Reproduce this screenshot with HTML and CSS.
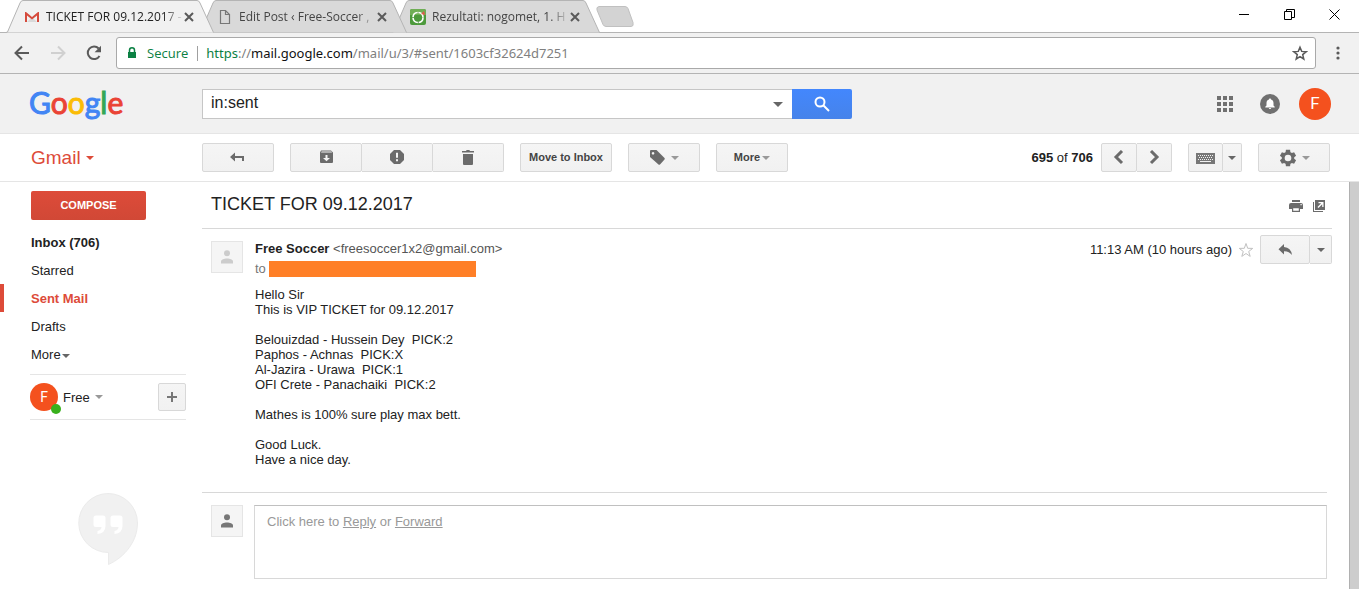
FILE: index.html
```
<!DOCTYPE html>
<html lang="en">
<head>
  <meta charset="UTF-8">
  <meta name="viewport" content="width=device-width, initial-scale=1.0">
  <title>TICKET FOR 09.12.2017 - Gmail</title>
  <link rel="stylesheet" href="styles.css">
</head>
<body>
  <!-- Browser tabs -->
  <div class="tab-strip">
    <div class="tabs">
      <div class="tab active">
        <svg class="tab-shape" viewBox="0 0 208 33" preserveAspectRatio="none"><path d="M0 32.5 L1.5 32 L14 3 Q15 .5 17 .5 L191 .5 Q193 .5 194 3 L207.5 32.5"/></svg>
        <svg class="favicon" viewBox="0 0 16 16"><path fill="#f2f2f2" d="M1 3h14v10H1z"/><path fill="#d9d9d9" d="M3 13l5-5 5 5z"/><path fill="#d54b3d" d="M1 3h1l6 5 6-5h1v10h-2V6.500L8 10.500 3 6.500V13H1z"/></svg>
        <span class="tab-title">TICKET FOR 09.12.2017 -</span>
        <button class="tab-close" aria-label="Close tab"><svg viewBox="0 0 10 10"><path d="M1 1l8 8M9 1l-8 8"/></svg></button>
      </div>
      <div class="tab second">
        <svg class="tab-shape" viewBox="0 0 208 33" preserveAspectRatio="none"><path d="M0 32.5 L1.5 32 L14 3 Q15 .5 17 .5 L191 .5 Q193 .5 194 3 L207.5 32.5"/></svg>
        <svg class="favicon" viewBox="0 0 16 16"><path fill="none" stroke="#777" stroke-width="1.2" d="M3.500 1.500h5l4 4v9h-9zM8.500 1.500v4h4"/></svg>
        <span class="tab-title">Edit Post ‹ Free-Soccer ,</span>
        <button class="tab-close" aria-label="Close tab"><svg viewBox="0 0 10 10"><path d="M1 1l8 8M9 1l-8 8"/></svg></button>
      </div>
      <div class="tab third">
        <svg class="tab-shape" viewBox="0 0 208 33" preserveAspectRatio="none"><path d="M0 32.5 L1.5 32 L14 3 Q15 .5 17 .5 L191 .5 Q193 .5 194 3 L207.5 32.5"/></svg>
        <svg class="favicon" viewBox="0 0 16 16"><rect width="16" height="16" rx="2" fill="#4d9a3c"/><path fill="#6fae55" d="M2 0h12q2 0 2 2v4H0V2q0-2 2-2z"/><circle cx="8" cy="8.5" r="5" fill="none" stroke="#fff" stroke-width="1.6" stroke-dasharray="7 .8"/><path fill="#e2574c" d="M11 5l3-3 1 4z"/></svg>
        <span class="tab-title">Rezultati: nogomet, 1. H</span>
        <button class="tab-close" aria-label="Close tab"><svg viewBox="0 0 10 10"><path d="M1 1l8 8M9 1l-8 8"/></svg></button>
      </div>
      <button class="new-tab" aria-label="New tab"><svg viewBox="0 0 38 21"><path d="M3 .5h26q2 0 3 2l5 14q1 4-2 4H10q-2 0-3-2L1 4q-1-3 2-3.500z"/></svg></button>
    </div>
    <div class="window-controls">
      <button aria-label="Minimize"><svg viewBox="0 0 11 11"><path d="M0 5.500h10"/></svg></button>
      <button aria-label="Restore"><svg viewBox="0 0 11 11"><path d="M.5 2.500h7v8h-7zM2.500 2.500v-2h8v8h-3"/></svg></button>
      <button aria-label="Close"><svg viewBox="0 0 11 11"><path d="M.5.5l10 10M10.500.5l-10 10"/></svg></button>
    </div>
  </div>

  <div class="address-row">
    <button class="nav-btn" aria-label="Back"><svg viewBox="0 0 16 16"><path d="M15 8H2M8 1.500L1.500 8 8 14.500"/></svg></button>
    <button class="nav-btn disabled" aria-label="Forward"><svg viewBox="0 0 16 16"><path d="M1 8h13M8 1.500L14.500 8 8 14.500"/></svg></button>
    <button class="nav-btn" aria-label="Reload"><svg viewBox="0 0 16 16"><path d="M13.500 11a6.300 6.300 0 1 1-.8-7.500"/><path class="solid" d="M15 .8v6.400H8.600z"/></svg></button>
    <div class="omnibox">
      <svg class="lock" viewBox="0 0 10 12"><path fill="none" stroke="#0b8043" stroke-width="1.5" d="M2.500 6V3.300a2.500 2.500 0 0 1 5 0V6"/><rect x="1" y="5" width="8" height="6" fill="#0b8043"/></svg>
      <span class="secure">Secure</span>
      <span class="url"><span class="scheme">https</span>://<span class="host">mail.google.com</span>/mail/u/3/#sent/1603cf32624d7251</span>
      <svg class="bookmark" viewBox="0 0 16 16"><path stroke-width="1.5" d="M8 2.200l1.700 4.200 4.500.3-3.500 2.900 1.100 4.400L8 11.600l-3.800 2.400 1.100-4.400-3.500-2.900 4.500-.3z"/></svg>
    </div>
    <button class="menu-btn" aria-label="Menu"><svg viewBox="0 0 4 14"><circle cx="2" cy="2" r="1.600"/><circle cx="2" cy="7" r="1.600"/><circle cx="2" cy="12" r="1.600"/></svg></button>
  </div>

  <!-- Google bar -->
  <header class="header">
    <a class="logo" href="#" aria-label="Google"><span class="blue">G</span><span class="red">o</span><span class="yellow">o</span><span class="blue">g</span><span class="green">l</span><span class="red">e</span></a>
    <form class="search">
      <input type="text" value="in:sent" aria-label="Search mail">
      <button type="button" class="search-options" aria-label="Search options"><span class="caret big"></span></button>
      <button type="button" class="search-btn" aria-label="Search"><svg viewBox="0 0 16 16"><circle cx="6" cy="6" r="4.500"/><path d="M9.500 9.500l5.500 5.500"/></svg></button>
    </form>
    <div class="header-right">
      <button class="apps" aria-label="Apps"><svg viewBox="0 0 16 16"><path d="M0 0h4v4H0zM6 0h4v4H6zM12 0h4v4h-4zM0 6h4v4H0zM6 6h4v4H6zM12 6h4v4h-4zM0 12h4v4H0zM6 12h4v4H6zM12 12h4v4h-4z"/></svg></button>
      <button class="bell" aria-label="Notifications"><svg viewBox="0 0 20 20"><circle cx="10" cy="10" r="10" fill="#707070"/><path fill="#fff" d="M10 4.500c.7 0 1 .4 1 1 1.700.5 2.500 1.800 2.500 3.500v2.500l1.200 1.200v.8H5.300v-.8l1.200-1.200V9c0-1.700.8-3 2.500-3.500 0-.6.300-1 1-1zM8.800 14h2.400q0 1-1.200 1t-1.200-1z"/></svg></button>
      <button class="avatar">F</button>
    </div>
  </header>

  <!-- Mail toolbar -->
  <div class="toolbar">
    <button class="gmail-menu">Gmail <span class="caret red-caret"></span></button>
    <div class="toolbar-left">
      <button class="btn" aria-label="Back to Sent Mail"><svg class="icon" viewBox="0 0 16 16"><path d="M0 7l5-4.500V6h9v5h-2V8H5v3.500z"/></svg></button>
      <div class="btn-group">
        <button class="btn" aria-label="Archive"><svg class="icon" viewBox="0 0 16 16"><path fill-rule="evenodd" d="M3 .5h10l2 2V12q0 1-1 1H3q-1 0-1-1V2.500zM3.700 1.600l-.7.900h11l-.7-.9zM7.500 5v3H5L8.500 11.300 12 8H9.500V5z"/></svg></button>
        <button class="btn" aria-label="Report spam"><svg class="icon" viewBox="0 0 16 16"><path fill-rule="evenodd" d="M5 0h6l4 4v6l-4 4H5l-4-4V4zM7 2.800v5h2v-5zM7 9.200v2h2v-2z"/></svg></button>
        <button class="btn" aria-label="Delete"><svg class="icon" viewBox="0 0 16 16"><path d="M2 1h4l.7-1h2.600L10 1h4v1.600H2zM3 4h10v10q0 1-1 1H4q-1 0-1-1z"/></svg></button>
      </div>
      <button class="btn wide">Move to Inbox</button>
      <button class="btn" aria-label="Labels"><svg class="icon" viewBox="0 0 16 16"><path fill-rule="evenodd" d="M2 0h5.500L15.500 8q.6.800 0 1.500L11 14.500q-.8.600-1.500 0L1 7V1q0-1 1-1zM4 2a1.300 1.300 0 1 0 .1 0z"/></svg><span class="caret pale gap"></span></button>
      <button class="btn">More<span class="caret pale near"></span></button>
    </div>
    <div class="toolbar-right">
      <span class="count"><b>695</b> of <b>706</b></span>
      <div class="btn-group narrow">
        <button class="btn" aria-label="Newer"><svg class="icon chevron" viewBox="0 0 16 16"><path d="M11 1L5 7l6 6"/></svg></button>
        <button class="btn" aria-label="Older"><svg class="icon chevron" viewBox="0 0 16 16"><path d="M5 1l6 6-6 6"/></svg></button>
      </div>
      <div class="btn-group keyboard">
        <button class="btn" aria-label="Input tools"><svg class="keys" viewBox="0 0 20 12"><path d="M0 1h19v11H0z"/><path stroke="#f1f1f1" stroke-dasharray="1 1" d="M2 3.500h15M3 5.500h14M2 7.500h15"/><path stroke="#f1f1f1" d="M4 9.500h11"/></svg></button>
        <button class="btn drop" aria-label="Select input tool"><span class="caret"></span></button>
      </div>
      <button class="btn" aria-label="Settings"><svg class="gear" viewBox="0 0 24 24"><path d="M19.400 13c0-.3.100-.7.100-1s0-.7-.1-1l2.300-1.800-2.400-4.200-2.700 1.100a8 8 0 0 0-1.700-1L14.500 2h-5l-.4 3.100a8 8 0 0 0-1.700 1L4.700 5 2.300 9.200 4.600 11a8 8 0 0 0 0 2l-2.300 1.800L4.700 19l2.700-1.100a8 8 0 0 0 1.700 1l.4 3.100h5l.4-3.100a8 8 0 0 0 1.700-1l2.700 1.100 2.400-4.200zM12 16a4 4 0 1 1 0-8 4 4 0 0 1 0 8z"/></svg><span class="caret pale"></span></button>
    </div>
  </div>

  <div class="main">
    <aside class="sidebar">
      <button class="compose">COMPOSE</button>
      <nav class="folders">
        <a href="#" class="unread">Inbox (706)</a>
        <a href="#">Starred</a>
        <a href="#" class="current">Sent Mail</a>
        <a href="#">Drafts</a>
        <a href="#">More <span class="caret small"></span></a>
      </nav>
      <div class="chat-user">
        <span class="chat-avatar">F<span class="online"></span></span>
        <span>Free</span>
        <span class="caret pale"></span>
        <button class="btn add" aria-label="New conversation"><svg viewBox="0 0 10 10"><path d="M5 0v10M0 5h10"/></svg></button>
      </div>
      <svg class="hangouts" viewBox="0 0 60 72"><path fill="#f1f1f1" stroke="#ebebeb" d="M30 .5a29.500 29.500 0 1 0 .5 59v12C47 64 59.500 48 59.500 30A29.500 29.500 0 0 0 30 .5z"/><path fill="#fff" d="M18 22.500h7q2.500 0 2.500 2.500v8q0 7-8 8v-3q4-1 4-4H18q-2.500 0-2.500-2.500V25q0-2.500 2.500-2.500zM35 22.500h7q2.500 0 2.500 2.500v8q0 7-8 8v-3q4-1 4-4H35q-2.500 0-2.500-2.500V25q0-2.500 2.500-2.500z"/></svg>
    </aside>

    <main class="content">
      <div class="subject">
        <h1>TICKET FOR 09.12.2017</h1>
        <button aria-label="Print all"><svg viewBox="0 0 14 14"><path fill-rule="evenodd" d="M3 2h8v2H3zM2 5h10q2 0 2 2v4h-3V9H3v2H0V7q0-2 2-2zM11.500 6v1.200h1.200V6zM3 9h8v5H3zM4.200 10.200v2.600h5.600v-2.600z"/></svg></button>
        <button aria-label="In new window"><svg viewBox="0 0 14 14"><path fill-rule="evenodd" d="M3 2h10v10H3zM6.500 4v1.300h2.700L5.500 9l1 1 3.700-3.700V9h1.300V4z"/><path d="M1 4h1v9h9v1H1z"/></svg></button>
      </div>

      <article class="message">
        <div class="photo"><svg viewBox="0 0 12 14"><circle cx="6" cy="3.200" r="3"/><path d="M0 13.500v-2C0 9.500 3 8.500 6 8.500s6 1 6 3v2z"/></svg></div>
        <div class="message-main">
          <div class="message-head">
            <div>
              <div class="from"><b>Free Soccer</b> <span>&lt;freesoccer1x2@gmail.com&gt;</span></div>
              <div class="to">to <span class="hidden-address"></span></div>
            </div>
            <div class="message-actions">
              <span>11:13 AM (10 hours ago)</span>
              <button class="star" aria-label="Star"><svg viewBox="0 0 16 16"><path d="M8 1.500l1.700 4.800 5 .1-4 3.100 1.500 4.900L8 11.500l-4.200 2.900 1.500-4.900-4-3.100 5-.1z"/></svg></button>
              <div class="btn-group reply">
                <button class="btn" aria-label="Reply"><svg class="icon" viewBox="0 0 16 16"><path d="M7 2v3q7 .5 8 8-3-4-8-3.800V12.500L1.500 7.200z"/></svg></button>
                <button class="btn drop" aria-label="More"><span class="caret"></span></button>
              </div>
            </div>
          </div>
          <div class="message-body">
            Hello Sir<br>
            This is VIP TICKET for 09.12.2017<br>
            <br>
            Belouizdad - Hussein Dey&nbsp; PICK:2<br>
            Paphos - Achnas&nbsp; PICK:X<br>
            Al-Jazira - Urawa&nbsp; PICK:1<br>
            OFI Crete - Panachaiki&nbsp; PICK:2<br>
            <br>
            Mathes is 100% sure play max bett.<br>
            <br>
            Good Luck.<br>
            Have a nice day.
          </div>
        </div>
      </article>

      <div class="reply-row">
        <div class="photo dark"><svg viewBox="0 0 12 14"><circle cx="6" cy="3.200" r="3"/><path d="M0 13.500v-2C0 9.500 3 8.500 6 8.500s6 1 6 3v2z"/></svg></div>
        <div class="reply-box">Click here to <a href="#">Reply</a> or <a href="#">Forward</a></div>
      </div>
    </main>
    <div class="scrollbar"></div>
  </div>
</body>
</html>
```

FILE: styles.css
```
* {
  box-sizing: border-box;
}

body {
  margin: 0;
  min-height: 100vh;
  display: flex;
  flex-direction: column;
  background: #fff;
  color: #222;
  font-family: "Liberation Sans", Arial, sans-serif;
  font-size: 13px;
  line-height: 15px;
}

button {
  margin: 0;
  padding: 0;
  border: 0;
  background: none;
  color: inherit;
  font: inherit;
  cursor: pointer;
}

a {
  color: inherit;
  text-decoration: none;
}

svg {
  display: block;
  flex: none;
}

/* Browser tabs */
.tab-strip {
  display: flex;
  justify-content: space-between;
  height: 33px;
  border-bottom: 1px solid #b4b4b4;
  font-family: "Open Sans", "Noto Sans", sans-serif;
  font-size: 12px;
}

.tabs {
  display: flex;
  padding-left: 6px;
}

.tab {
  position: relative;
  display: flex;
  align-items: center;
  width: 208px;
  height: 33px;
  margin-right: -15px;
  padding: 0 20px 0 18px;
  color: #444;
}

.active {
  z-index: 3;
  color: #222;
}

.second {
  z-index: 2;
}

.third {
  z-index: 1;
}

.tab-shape {
  position: absolute;
  left: 0;
  top: 0;
  z-index: -1;
  width: 100%;
  height: 100%;
  fill: #d9d9d9;
  stroke: #b4b4b4;
}

.active .tab-shape {
  fill: #f1f1f1;
}

.favicon {
  width: 16px;
  height: 16px;
  margin-right: 6px;
}

/* long titles fade out before the close button */
.tab-title {
  flex: 1;
  white-space: nowrap;
  -webkit-mask-image: linear-gradient(to right, #000 85%, transparent);
  mask-image: linear-gradient(to right, #000 85%, transparent);
}

.tab-close svg {
  width: 10px;
  height: 10px;
  stroke: #5a5a5a;
  stroke-width: 2;
}

.new-tab {
  margin-left: 11px;
}

.new-tab svg {
  width: 38px;
  height: 21px;
  fill: #d3d3d3;
  stroke: #c0c0c0;
}

.window-controls {
  display: flex;
  align-items: center;
  gap: 34px;
  padding: 0 19px 4px 0;
}

.window-controls svg {
  width: 11px;
  height: 11px;
  fill: none;
  stroke: #000;
}

.address-row {
  display: flex;
  align-items: center;
  height: 41px;
  padding: 0 19px 0 14px;
  background: #f1f1f1;
  border-bottom: 1px solid #b4b4b4;
  font-family: "Open Sans", "Noto Sans", sans-serif;
  font-size: 13px;
}

.nav-btn {
  margin-right: 20px;
}

.nav-btn svg {
  width: 16px;
  height: 16px;
  fill: none;
  stroke: #5a5a5a;
  stroke-width: 2;
}

.nav-btn .solid {
  fill: #5a5a5a;
  stroke: none;
}

.disabled svg {
  stroke: #d0d0d0;
}

.omnibox {
  display: flex;
  flex: 1;
  align-items: center;
  height: 32px;
  margin-left: -6px;
  padding: 0 7px 0 10px;
  background: #fff;
  border: 1px solid #a9a9a9;
  border-radius: 3px;
}

.lock {
  width: 10px;
  height: 12px;
}

.secure {
  margin-left: 10px;
  padding-right: 9px;
  color: #0b8043;
}

.url {
  padding-left: 8px;
  border-left: 1px solid #a0a0a0;
  color: #808080;
  font-family: "Noto Sans", sans-serif;
}

.scheme {
  color: #0b8043;
}

.host {
  color: #111;
}

.bookmark {
  width: 16px;
  height: 16px;
  margin-left: auto;
  fill: none;
  stroke: #5a5a5a;
}

.menu-btn {
  margin-left: 20px;
}

.menu-btn svg {
  width: 4px;
  height: 14px;
  fill: #5a5a5a;
}

/* Google bar */
.header {
  display: flex;
  align-items: center;
  height: 60px;
  padding-right: 28px;
  background: #f1f1f1;
  border-bottom: 1px solid #e5e5e5;
}

.logo {
  width: 202px;
  padding: 0 0 3px 29px;
  font-family: Lato, sans-serif;
  font-size: 30px;
  line-height: 32px;
  -webkit-text-stroke: 1px;
}

.blue {
  color: #4285f4;
}

.red {
  color: #ea4335;
}

.yellow {
  color: #fbbc05;
}

.green {
  color: #34a853;
}

.search {
  display: flex;
  width: 650px;
  height: 30px;
}

.search input {
  flex: 1;
  min-width: 0;
  padding: 0 8px 2px;
  border: 1px solid #c6c6c6;
  border-right: 0;
  color: #222;
  font: 16px "Liberation Sans", Arial, sans-serif;
}

.search-options {
  width: 28px;
  background: #fff;
  border: solid #c6c6c6;
  border-width: 1px 0;
}

.search-btn {
  display: flex;
  align-items: center;
  justify-content: center;
  width: 60px;
  background: linear-gradient(#4387fd, #4683ea);
  border-radius: 0 2px 2px 0;
}

.search-btn svg {
  width: 16px;
  height: 16px;
  fill: none;
  stroke: #fff;
  stroke-width: 2;
}

.header-right {
  display: flex;
  align-items: center;
  margin-left: auto;
}

.apps svg {
  width: 16px;
  height: 16px;
  fill: #707070;
}

.bell {
  margin: 0 19px 0 27px;
}

.bell svg {
  width: 20px;
  height: 20px;
}

.avatar {
  width: 32px;
  height: 32px;
  background: #f4511e;
  border-radius: 50%;
  color: #fff;
  font-family: Roboto, sans-serif;
  font-size: 17px;
}

/* Carets */
.caret {
  display: inline-block;
  border: 4px solid transparent;
  border-top-color: #666;
  border-bottom: 0;
  vertical-align: middle;
}

.caret.pale {
  border-top-color: #999;
}

.caret.big {
  border-width: 5px 5px 0;
}

.caret.gap {
  margin-left: 6px;
}

.caret.near {
  margin-left: 2px;
}

.caret.red-caret {
  border-top-color: #dd4b39;
}

/* Toolbar */
.toolbar {
  display: flex;
  align-items: center;
  height: 48px;
  padding-right: 29px;
  border-bottom: 1px solid #e5e5e5;
}

.gmail-menu {
  width: 202px;
  padding-left: 31px;
  color: #dd4b39;
  font-size: 19px;
  line-height: 24px;
  text-align: left;
}

.toolbar-left,
.toolbar-right {
  display: flex;
  align-items: center;
  gap: 16px;
}

.toolbar-right {
  margin-left: auto;
}

.btn {
  display: flex;
  align-items: center;
  justify-content: center;
  width: 72px;
  height: 29px;
  background: linear-gradient(#f5f5f5, #f1f1f1);
  border: 1px solid #d8d8d8;
  border-radius: 2px;
  color: #444;
  font-size: 11px;
  font-weight: bold;
  white-space: nowrap;
}

.btn.wide {
  width: 92px;
}

.btn-group {
  display: flex;
}

.btn-group .btn + .btn {
  width: 71px;
  border-left: 0;
  border-radius: 0 2px 2px 0;
}

.btn-group.narrow .btn {
  width: 36px;
}

.btn-group.narrow .btn + .btn {
  width: 35px;
}

.btn-group.keyboard .btn {
  width: 35px;
}

.btn-group.reply .btn {
  width: 50px;
}

.btn-group.keyboard .drop {
  width: 19px;
}

.btn-group.reply .drop {
  width: 22px;
}

.icon {
  width: 16px;
  height: 16px;
  fill: #6b6b6b;
}

.chevron {
  fill: none;
  stroke: #6b6b6b;
  stroke-width: 3;
}

.keys {
  width: 20px;
  height: 12px;
  fill: #777;
}

.gear {
  width: 20px;
  height: 20px;
  margin-right: 4px;
  fill: #6b6b6b;
}

.count {
  margin-right: -8px;
}

/* Main area */
.main {
  display: flex;
  flex: 1;
}

.sidebar {
  flex: none;
  width: 202px;
  padding-top: 9px;
}

.compose {
  display: block;
  width: 115px;
  height: 29px;
  margin: 0 0 8px 31px;
  background: linear-gradient(#dd4b39, #d14836);
  border-radius: 2px;
  color: #fff;
  font-size: 11px;
  font-weight: bold;
}

.folders a {
  display: block;
  padding: 2px 0 0 31px;
  line-height: 26px;
}

.folders .unread {
  font-weight: bold;
}

.folders .current {
  padding-left: 27px;
  border-left: 4px solid #dd4b39;
  color: #dd4b39;
  font-weight: bold;
}

.caret.small {
  margin-left: -2px;
}

.chat-user {
  display: flex;
  align-items: center;
  gap: 5px;
  height: 46px;
  margin: 6px 16px 0 30px;
  border: solid #e5e5e5;
  border-width: 1px 0;
}

.chat-avatar {
  position: relative;
  width: 28px;
  height: 28px;
  background: #f4511e;
  border-radius: 50%;
  color: #fff;
  font-family: Roboto, sans-serif;
  font-size: 14px;
  line-height: 28px;
  text-align: center;
}

.online {
  position: absolute;
  right: -3px;
  bottom: -3px;
  width: 10px;
  height: 10px;
  background: #38b01c;
  border-radius: 50%;
}

.btn.add {
  width: 28px;
  height: 28px;
  margin-left: auto;
}

.add svg {
  width: 10px;
  height: 10px;
  stroke: #777;
  stroke-width: 2;
}

.hangouts {
  width: 60px;
  height: 72px;
  margin: 73px 0 0 78px;
}

.content {
  flex: 1;
  min-width: 0;
  padding-right: 17px;
}

.subject {
  display: flex;
  align-items: center;
  gap: 9px;
  height: 47px;
  padding: 0 6px 0 9px;
  border-bottom: 1px solid #d8d8d8;
}

.subject h1 {
  flex: 1;
  margin: 0;
  padding-bottom: 2px;
  font-size: 18px;
  font-weight: normal;
  line-height: 20px;
}

.subject svg {
  width: 14px;
  height: 14px;
  fill: #6b6b6b;
}

.message {
  display: flex;
  gap: 12px;
  margin-right: 5px;
  padding: 6px 0 25px 9px;
  border-bottom: 1px solid #d8d8d8;
}

.photo {
  display: flex;
  flex: none;
  align-items: center;
  justify-content: center;
  width: 32px;
  height: 32px;
  background: #f5f5f5;
  border: 1px solid #e5e5e5;
}

.photo svg {
  width: 12px;
  height: 14px;
  fill: #ccc;
}

.photo.dark svg {
  fill: #777;
}

.message .photo {
  margin-top: 6px;
}

.message-main {
  flex: 1;
}

.message-head {
  display: flex;
  justify-content: space-between;
  margin-right: -5px;
}

.from {
  padding-top: 2px;
  line-height: 24px;
}

.from span {
  color: #555;
}

.to {
  display: flex;
  gap: 3px;
  color: #777;
}

.hidden-address {
  width: 207px;
  height: 16px;
  background: #ff7f27;
}

.message-actions {
  display: flex;
  align-items: center;
  height: 29px;
}

.star {
  margin: 0 6px;
}

.star svg {
  width: 16px;
  height: 16px;
  fill: none;
  stroke: #c0c0c0;
}

.message-body {
  margin-top: 10px;
}

.reply-row {
  display: flex;
  gap: 11px;
  margin-right: 5px;
  padding: 12px 0 10px 9px;
}

.reply-box {
  flex: 1;
  height: 74px;
  padding: 8px 12px;
  border: 1px solid #d8d8d8;
  border-top-color: #c0c0c0;
  color: #999;
}

.reply-box a {
  text-decoration: underline;
}

.scrollbar {
  width: 10px;
  background: #cdcdcd;
  border-left: 1px solid #b0b0b0;
}
```
